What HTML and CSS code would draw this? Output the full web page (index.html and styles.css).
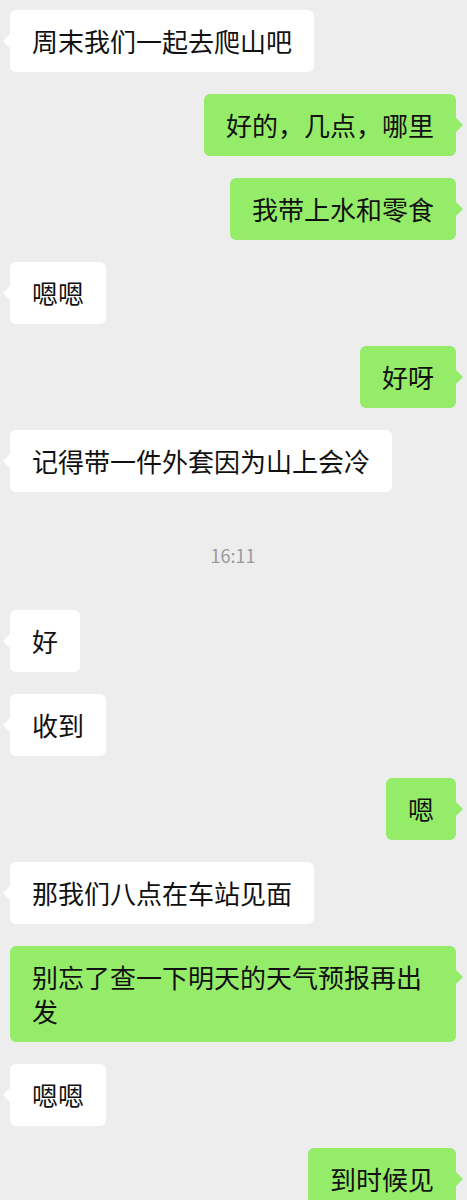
FILE: index.html
```html
<!DOCTYPE html>
<html lang="zh-CN">
<head>
    <meta charset="UTF-8">
    <title>聊天</title>
    <link rel="stylesheet" href="styles.css">
</head>
<body>
    <div class="chat">
        <div class="msg left"><div class="bubble">周末我们一起去爬山吧</div></div>
        <div class="msg right"><div class="bubble">好的，几点，哪里</div></div>
        <div class="msg right"><div class="bubble">我带上水和零食</div></div>
        <div class="msg left"><div class="bubble">嗯嗯</div></div>
        <div class="msg right"><div class="bubble">好呀</div></div>
        <div class="msg left"><div class="bubble">记得带一件外套因为山上会冷</div></div>
        <div class="time">16:11</div>
        <div class="msg left"><div class="bubble">好</div></div>
        <div class="msg left"><div class="bubble">收到</div></div>
        <div class="msg right"><div class="bubble">嗯</div></div>
        <div class="msg left"><div class="bubble">那我们八点在车站见面</div></div>
        <div class="msg right"><div class="bubble">别忘了查一下明天的天气预报再出发</div></div>
        <div class="msg left"><div class="bubble">嗯嗯</div></div>
        <div class="msg right"><div class="bubble">到时候见</div></div>
    </div>
</body>
</html>
```

FILE: styles.css
```css
body {
    margin: 0;
    padding: 0;
    background-color: #ededed;
    font-family: "Noto Sans CJK SC", "Noto Sans", sans-serif;
}

.chat {
    display: flex;
    flex-direction: column;
    gap: 22px;
    padding: 10px 11px 10px 10px;
}

.msg {
    display: flex;
}

.msg.right {
    justify-content: flex-end;
}

.bubble {
    position: relative;
    max-width: 404px;
    padding: 14px 22px;
    font-size: 26px;
    line-height: 34px;
    color: #111;
    border-radius: 6px;
    background-color: #fff;
}

.right .bubble {
    background-color: #95ec69;
}

.bubble::before {
    content: "";
    position: absolute;
    top: 24px;
    width: 0;
    height: 0;
    border-top: 7px solid transparent;
    border-bottom: 7px solid transparent;
}

.left .bubble::before {
    left: -7px;
    border-right: 7px solid #fff;
}

.right .bubble::before {
    right: -7px;
    border-left: 7px solid #95ec69;
}

.time {
    text-align: center;
    font-size: 18px;
    color: #9a9a9a;
    padding: 28px 0 20px;
}
```
